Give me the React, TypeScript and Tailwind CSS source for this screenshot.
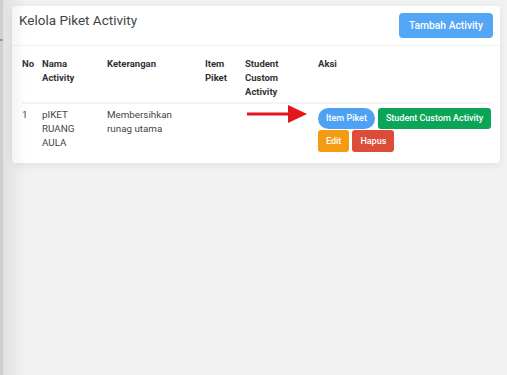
const cols = "grid grid-cols-[20px_65px_98px_40px_73px_1fr]";

export default function App() {
  return (
    <div className="relative flex h-[375px] w-full overflow-hidden bg-[#f2f2f2] font-['Roboto',sans-serif]">
      {/* left edge strip */}
      <div className="relative w-[3px] shrink-0 bg-[#cfcfcf]">
        <div className="absolute left-0 top-[39px] h-[2px] w-[3px] bg-[#9a9a9a]" />
      </div>

      <div className="flex-1 pl-[9px] pt-[6px]">
        <div className="w-[488px] rounded-[3px] bg-white shadow-[0_2px_8px_rgba(0,0,0,0.08)]">
          {/* header */}
          <div className="flex items-start justify-between border-b border-[#f2f2f2] px-[7px] pb-[7px] pt-[7px]">
            <h1 className="text-[13.5px] leading-[14px] text-[#444]">Kelola Piket Activity</h1>
            <button className="h-[25px] w-[94px] rounded-[4px] bg-[#52a6f5] text-[10.3px] font-medium text-white">
              Tambah Activity
            </button>
          </div>

          {/* table */}
          <div className="pl-[10px] pr-[8px]">
            <div className={`${cols} border-b-2 border-[#f4f4f4] pb-[3px] pt-[11px] text-[9.5px] font-bold leading-[14px] text-[#333]`}>
              <div>No</div>
              <div>Nama<br />Activity</div>
              <div>Keterangan</div>
              <div>Item<br />Piket</div>
              <div>Student<br />Custom<br />Activity</div>
              <div>Aksi</div>
            </div>

            <div className={`${cols} pb-[11px] pt-[4px] text-[9.8px] leading-[14px] text-[#444]`}>
              <div>1</div>
              <div>pIKET<br />RUANG<br />AULA</div>
              <div>Membersihkan<br />runag utama</div>
              <div />
              <div>
                <svg className="-mt-[3px] ml-[2px]" width="60" height="18" viewBox="0 0 60 18">
                  <rect x="0" y="7.5" width="43" height="3" fill="#e3171b" />
                  <polygon points="41,0 60,9 41,18" fill="#e3171b" />
                </svg>
              </div>
              <div className="flex flex-wrap gap-x-[3px] gap-y-[1px] text-[9px] font-medium leading-none text-white">
                <button className="h-[21px] rounded-full bg-[#4ea2f3] px-[8px]">Item Piket</button>
                <button className="h-[21px] rounded-[3px] bg-[#0aa557] px-[8px]">Student Custom Activity</button>
                <button className="h-[22px] rounded-[3px] bg-[#f39c12] px-[8px]">Edit</button>
                <button className="h-[22px] rounded-[3px] bg-[#dd4b39] px-[8px]">Hapus</button>
              </div>
            </div>
          </div>
        </div>
      </div>

      {/* soft shadow cast from the left edge */}
      <div className="pointer-events-none absolute left-[3px] top-0 h-full w-[24px] bg-gradient-to-r from-black/[0.07] to-transparent" />
    </div>
  );
}
